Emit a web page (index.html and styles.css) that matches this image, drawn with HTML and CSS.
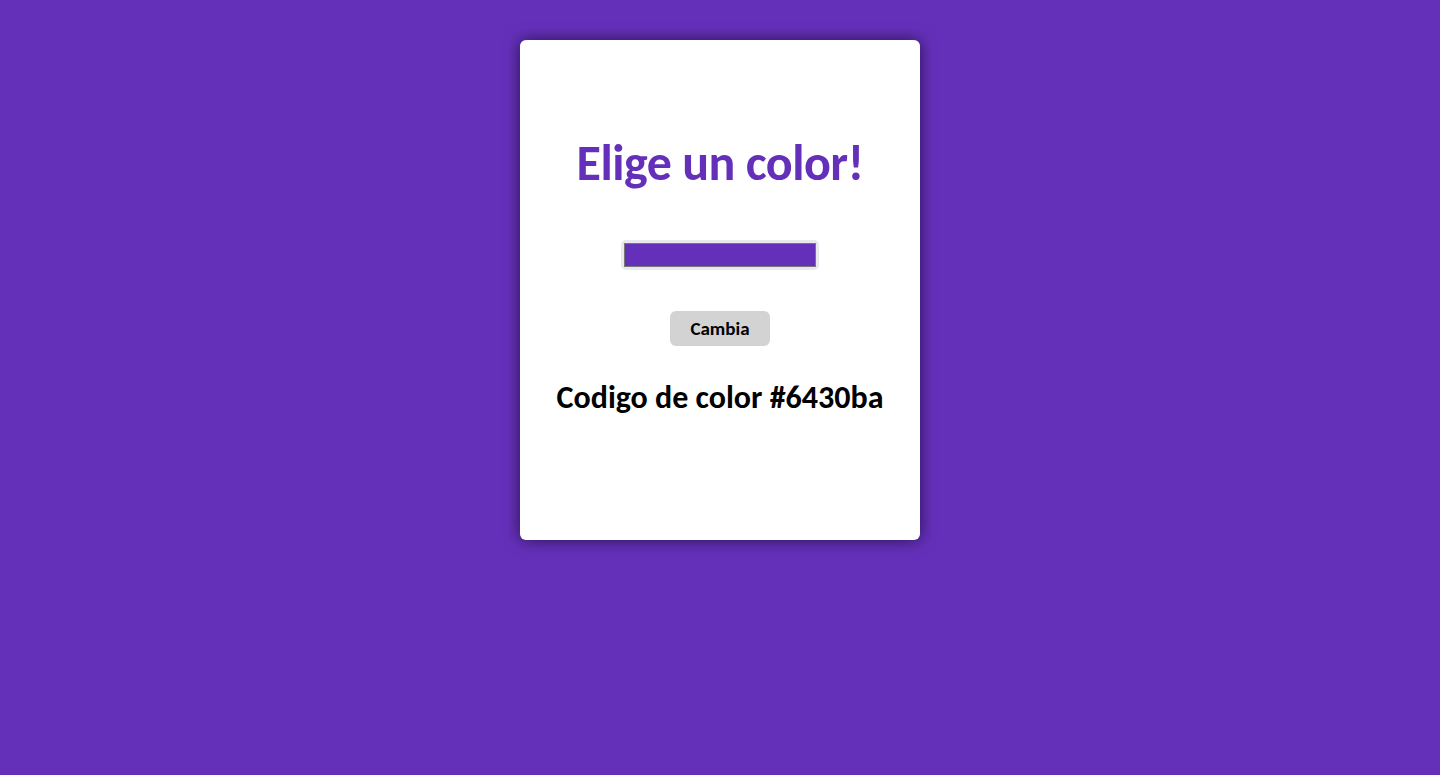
FILE: index.html
```html
<!DOCTYPE html>
<html lang="es">
<head>
<meta charset="utf-8">
<title>Elige un color</title>
<link rel="stylesheet" href="styles.css">
</head>
<body>
<main class="card">
  <h1 class="title">Elige un color!</h1>
  <input class="picker" type="color" value="#6430ba">
  <button class="btn" type="button">Cambia</button>
  <p class="code">Codigo de color #6430ba</p>
</main>
</body>
</html>
```
FILE: styles.css
```css
html, body {
  margin: 0;
  padding: 0;
}
body {
  background: #6430ba;
  font-family: Calibri, Carlito, Lato, "Liberation Sans", sans-serif;
  min-height: 775px;
}
.card {
  box-sizing: border-box;
  width: 400px;
  height: 500px;
  margin: 40px auto 0;
  background: #ffffff;
  border-radius: 6px;
  box-shadow: 0 0 16px rgba(0, 0, 0, 0.6);
  display: flex;
  flex-direction: column;
  align-items: center;
  padding-top: 93px;
}
.title {
  margin: 0;
  font-size: 50px;
  line-height: 60px;
  font-weight: 700;
  color: #6430ba;
  letter-spacing: -0.5px;
}
.picker {
  -webkit-appearance: none;
  appearance: none;
  box-sizing: border-box;
  margin: 47px 0 0;
  width: 198px;
  height: 30px;
  padding: 3px;
  border: none;
  border-radius: 5px;
  background: #e9e9ed;
}
.picker::-webkit-color-swatch-wrapper {
  padding: 0;
}
.picker::-webkit-color-swatch {
  border: 1px solid #777777;
  border-radius: 0;
}
.btn {
  margin-top: 41px;
  width: 100px;
  height: 35px;
  border: none;
  border-radius: 6px;
  background: #d3d3d3;
  font-family: inherit;
  font-weight: 700;
  font-size: 19px;
  color: #000;
  padding: 0;
}
.code {
  margin: 33px 0 0;
  font-size: 32px;
  line-height: 38px;
  font-weight: 700;
  color: #000;
}
```
